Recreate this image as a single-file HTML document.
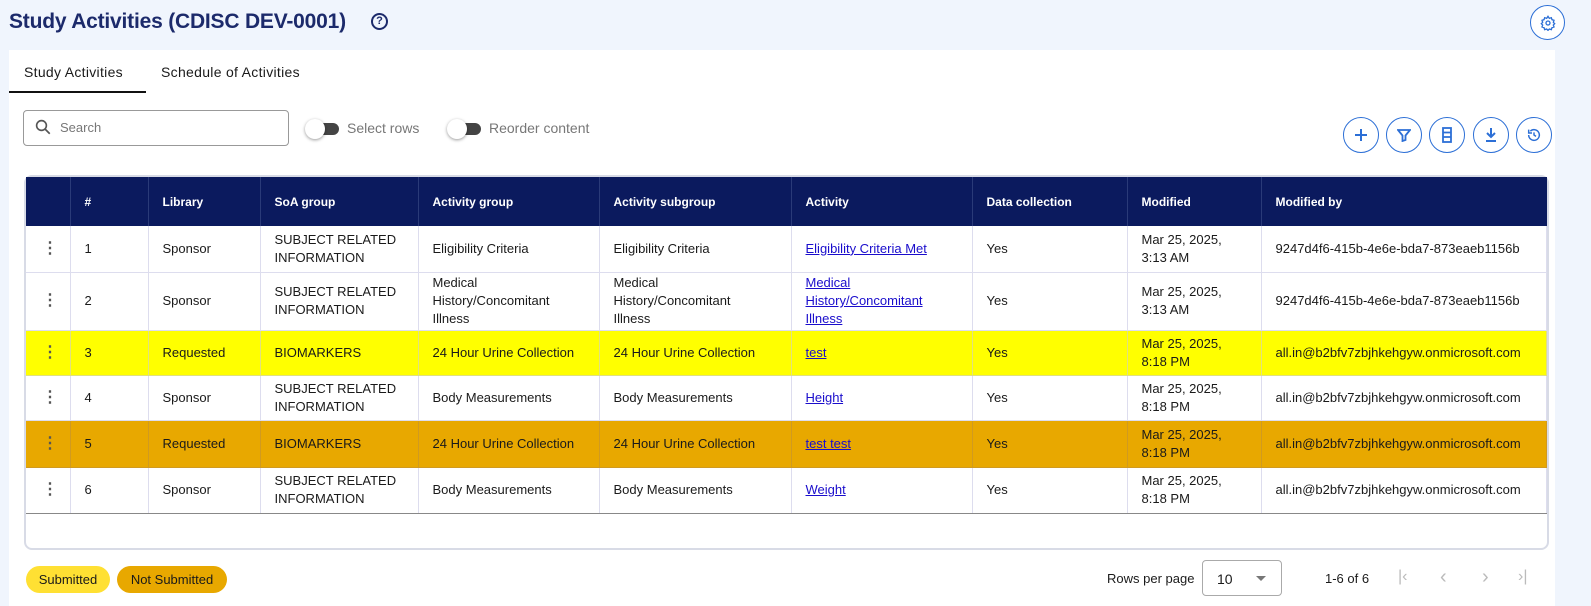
<!DOCTYPE html><html><head><style>
*{box-sizing:border-box;margin:0;padding:0}
body{width:1591px;height:606px;background:#f0f5fd;font-family:"Liberation Sans",sans-serif;position:relative;overflow:hidden;color:#1a1a1a}
.abs{position:absolute}
h1{position:absolute;left:9px;top:10px;font-size:21px;font-weight:bold;color:#1c2a6b;letter-spacing:-0.2px}
.panel{position:absolute;left:9px;top:50px;width:1546px;height:556px;background:#fff}
.circ{position:absolute;width:36px;height:36px;border:1.5px solid #2c6fd6;border-radius:50%;display:flex;align-items:center;justify-content:center;background:#fff}
table{position:absolute;left:26px;top:177px;width:1521px;border-collapse:collapse;font-size:13px;table-layout:fixed}
th{background:#0b1a5e;color:#fff;font-weight:bold;font-size:12px;text-align:left;height:49px;padding-left:14px;border-right:1px solid #2a3a78}
td{padding-left:14px;border-right:1px solid #dde;border-bottom:1px solid #dde;line-height:18px;vertical-align:middle}
td a{color:#1a0dcc;text-decoration:underline}
.y td{background:#ffff00;border-color:#e0e080}
.o td{background:#e8a800;border-color:#d09a20}
.dots{font-size:16px;font-weight:bold;color:#555;padding-left:16px}
.tog{position:absolute;width:32px;height:12px;background:#444;border-radius:6px}
.tog:before{content:"";position:absolute;left:-2px;top:-4px;width:20px;height:20px;border-radius:50%;background:#fff;box-shadow:0 1px 3px rgba(0,0,0,.4)}
</style></head><body>
<h1>Study Activities (CDISC DEV-0001)</h1>
<div class="abs" style="left:371px;top:13px;width:17px;height:17px;border:2px solid #1c2a6b;border-radius:50%;font-size:11px;font-weight:bold;color:#1c2a6b;text-align:center;line-height:13px">?</div>
<div class="circ" style="left:1530px;top:5px;width:35px;height:35px"><svg width="16" height="16" viewBox="0 0 24 24" fill="none" stroke="#2c6fd6" stroke-width="2"><circle cx="12" cy="12" r="3"/><path d="M12 2l2 3 3-1 1 3 3 1-1 3 2 2-2 2 1 3-3 1-1 3-3-1-2 2-2-2-3 1-1-3-3-1 1-3-2-2 2-2-1-3 3-1 1-3 3 1z"/></svg></div>
<div class="panel"></div>
<div class="abs" style="left:24px;top:64px;font-size:14px;letter-spacing:0.3px">Study Activities</div>
<div class="abs" style="left:161px;top:64px;font-size:14px;letter-spacing:0.3px">Schedule of Activities</div>
<div class="abs" style="left:9px;top:91px;width:137px;height:2px;background:#111"></div>
<div class="abs" style="left:23px;top:110px;width:266px;height:36px;border:1px solid #999;border-radius:4px"></div>
<svg class="abs" style="left:34px;top:118px" width="18" height="18" viewBox="0 0 24 24" fill="none" stroke="#555" stroke-width="2.2"><circle cx="10" cy="10" r="6.5"/><path d="M15 15l6 6"/></svg>
<div class="abs" style="left:60px;top:120px;font-size:13px;color:#777">Search</div>
<div class="tog" style="left:307px;top:123px"></div>
<div class="abs" style="left:347px;top:120px;font-size:14px;color:#777">Select rows</div>
<div class="tog" style="left:449px;top:123px"></div>
<div class="abs" style="left:489px;top:120px;font-size:14px;color:#777">Reorder content</div>
<div class="circ" style="left:1343px;top:117px"><svg width="14" height="14" viewBox="0 0 14 14" stroke="#2c6fd6" stroke-width="2"><path d="M7 1v12M1 7h12"/></svg></div>
<div class="circ" style="left:1386px;top:117px"><svg width="14" height="14" viewBox="0 0 14 14" fill="none" stroke="#2c6fd6" stroke-width="1.8"><path d="M1 2h12L8.5 7.5V12l-3 1V7.5z"/></svg></div>
<div class="circ" style="left:1429px;top:117px"><svg width="12" height="16" viewBox="0 0 12 16" fill="none" stroke="#2c6fd6" stroke-width="1.8"><rect x="2" y="1" width="8" height="14"/><path d="M2 5.5h8M2 10h8"/></svg></div>
<div class="circ" style="left:1473px;top:117px"><svg width="14" height="16" viewBox="0 0 14 16" fill="none" stroke="#2c6fd6" stroke-width="2"><path d="M7 1v9M3 6l4 4 4-4M2 14h10"/></svg></div>
<div class="circ" style="left:1516px;top:117px"><svg width="16" height="16" viewBox="0 0 24 24" fill="none" stroke="#2c6fd6" stroke-width="2.2"><path d="M4 12a8 8 0 1 0 2.5-5.8M4 4v5h5"/><path d="M12 8v4l3 2"/></svg></div>
<div class="abs" style="left:24px;top:175px;width:1525px;height:375px;border:2px solid #d8dbe6;border-radius:8px"></div>
<table>
<tr><th style="width:44px"></th><th style="width:78px">#</th><th style="width:112px">Library</th><th style="width:158px">SoA group</th><th style="width:181px">Activity group</th><th style="width:192px">Activity subgroup</th><th style="width:181px">Activity</th><th style="width:155px">Data collection</th><th style="width:134px">Modified</th><th style="border-right:0">Modified by</th></tr>
<tr style="height:46px"><td class="dots">⋮</td><td>1</td><td>Sponsor</td><td>SUBJECT RELATED INFORMATION</td><td>Eligibility Criteria</td><td>Eligibility Criteria</td><td><a>Eligibility Criteria Met</a></td><td>Yes</td><td>Mar 25, 2025,<br>3:13 AM</td><td>9247d4f6-415b-4e6e-bda7-873eaeb1156b</td></tr>
<tr style="height:58px"><td class="dots">⋮</td><td>2</td><td>Sponsor</td><td>SUBJECT RELATED INFORMATION</td><td>Medical<br>History/Concomitant<br>Illness</td><td>Medical<br>History/Concomitant<br>Illness</td><td><a>Medical<br>History/Concomitant<br>Illness</a></td><td>Yes</td><td>Mar 25, 2025,<br>3:13 AM</td><td>9247d4f6-415b-4e6e-bda7-873eaeb1156b</td></tr>
<tr class="y" style="height:45px"><td class="dots">⋮</td><td>3</td><td>Requested</td><td>BIOMARKERS</td><td>24 Hour Urine Collection</td><td>24 Hour Urine Collection</td><td><a>test</a></td><td>Yes</td><td>Mar 25, 2025,<br>8:18 PM</td><td>all.in@b2bfv7zbjhkehgyw.onmicrosoft.com</td></tr>
<tr style="height:45px"><td class="dots">⋮</td><td>4</td><td>Sponsor</td><td>SUBJECT RELATED INFORMATION</td><td>Body Measurements</td><td>Body Measurements</td><td><a>Height</a></td><td>Yes</td><td>Mar 25, 2025,<br>8:18 PM</td><td>all.in@b2bfv7zbjhkehgyw.onmicrosoft.com</td></tr>
<tr class="o" style="height:47px"><td class="dots">⋮</td><td>5</td><td>Requested</td><td>BIOMARKERS</td><td>24 Hour Urine Collection</td><td>24 Hour Urine Collection</td><td><a>test test</a></td><td>Yes</td><td>Mar 25, 2025,<br>8:18 PM</td><td>all.in@b2bfv7zbjhkehgyw.onmicrosoft.com</td></tr>
<tr style="height:46px"><td class="dots" style="border-bottom:1px solid #888">⋮</td><td style="border-bottom:1px solid #888">6</td><td style="border-bottom:1px solid #888">Sponsor</td><td style="border-bottom:1px solid #888">SUBJECT RELATED INFORMATION</td><td style="border-bottom:1px solid #888">Body Measurements</td><td style="border-bottom:1px solid #888">Body Measurements</td><td style="border-bottom:1px solid #888"><a>Weight</a></td><td style="border-bottom:1px solid #888">Yes</td><td style="border-bottom:1px solid #888">Mar 25, 2025,<br>8:18 PM</td><td style="border-bottom:1px solid #888">all.in@b2bfv7zbjhkehgyw.onmicrosoft.com</td></tr>
</table>
<div class="abs" style="left:26px;top:566px;width:84px;height:27px;background:#ffe033;border-radius:14px;font-size:13px;text-align:center;line-height:27px">Submitted</div>
<div class="abs" style="left:117px;top:566px;width:110px;height:27px;background:#e8a800;border-radius:14px;font-size:13px;text-align:center;line-height:27px">Not Submitted</div>
<div class="abs" style="left:1107px;top:571px;font-size:13px">Rows per page</div>
<div class="abs" style="left:1202px;top:560px;width:80px;height:36px;border:1px solid #aaa;border-radius:4px;font-size:14px;padding:10px 0 0 14px">10</div>
<div class="abs" style="left:1256px;top:576px;width:0;height:0;border-left:5px solid transparent;border-right:5px solid transparent;border-top:5px solid #777"></div>
<div class="abs" style="left:1325px;top:571px;font-size:13px">1-6 of 6</div>
<div class="abs" style="left:1398px;top:568px;font-size:16px;color:#bbb">|&lsaquo;</div>
<div class="abs" style="left:1440px;top:566px;font-size:20px;color:#bbb">&lsaquo;</div>
<div class="abs" style="left:1482px;top:566px;font-size:20px;color:#bbb">&rsaquo;</div>
<div class="abs" style="left:1518px;top:568px;font-size:16px;color:#bbb">&rsaquo;|</div>
</body></html>
